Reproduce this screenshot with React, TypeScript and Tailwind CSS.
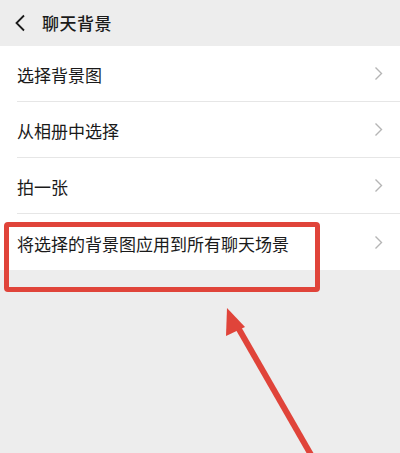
import React from 'react';

const items = ['选择背景图', '从相册中选择', '拍一张', '将选择的背景图应用到所有聊天场景'];

const Chevron = () => (
  <svg width="9" height="15" viewBox="0 0 9 15" fill="none" className="shrink-0">
    <path d="M1.5 1.5 L7.5 7.5 L1.5 13.5" stroke="#b5b5b5" strokeWidth="1.4" />
  </svg>
);

export default function App() {
  return (
    <div
      className="relative w-[400px] h-[453px] overflow-hidden bg-[#ededed]"
      style={{ fontFamily: '"Noto Sans CJK SC", "Noto Sans", sans-serif' }}
    >
      {/* Header */}
      <div className="h-[46px] flex items-center px-[14px] gap-[16px] bg-[#ededed]">
        <svg width="12" height="18" viewBox="0 0 12 18" fill="none">
          <path d="M10 1.5 L2.5 9 L10 16.5" stroke="#1a1a1a" strokeWidth="1.8" />
        </svg>
        <span className="text-[17px] font-medium text-[#1a1a1a] tracking-[0.5px]">聊天背景</span>
      </div>

      {/* List */}
      <div className="bg-white">
        {items.map((t, i) => (
          <div key={t} className="pl-[17px]">
            <div
              className={`h-[56px] flex items-center justify-between pr-[17px] ${
                i < items.length - 1 ? 'border-b border-[#e6e6e6]' : ''
              }`}
            >
              <span className="text-[17px] text-[#1a1a1a] pt-[3px]">{t}</span>
              <Chevron />
            </div>
          </div>
        ))}
      </div>

      {/* Highlight box */}
      <div className="absolute left-[4px] top-[222px] w-[316px] h-[70px] border-[5px] border-[#e0443a] rounded-[4px]" />

      {/* Arrow */}
      <svg className="absolute left-0 top-0" width="400" height="453" viewBox="0 0 400 453">
        <line x1="314" y1="460" x2="236" y2="324" stroke="#e0443a" strokeWidth="6" />
        <polygon points="227,308 245,327 226,336" fill="#e0443a" />
      </svg>
    </div>
  );
}
